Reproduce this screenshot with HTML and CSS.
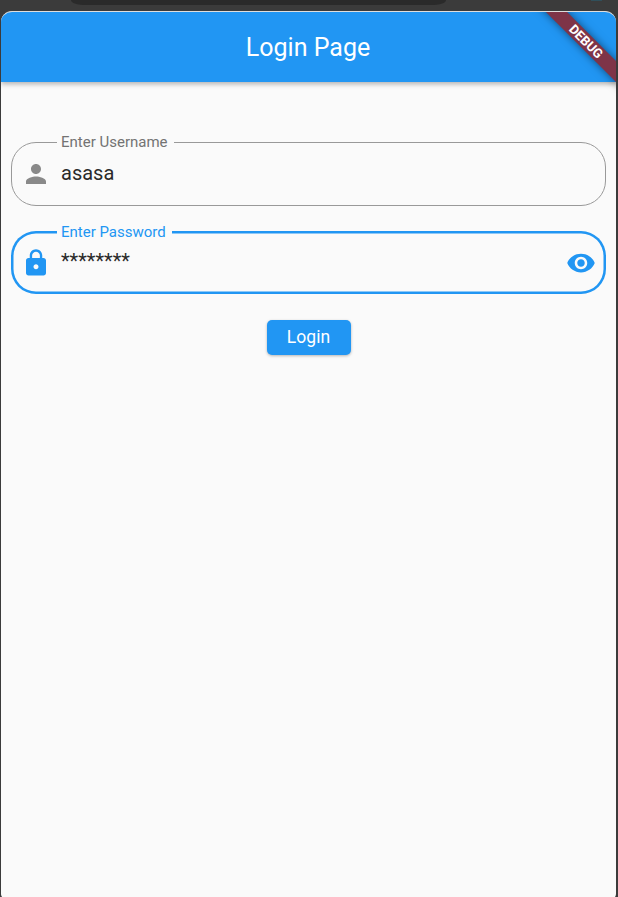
FILE: index.html
```
<!DOCTYPE html>
<html lang="en">
<head>
<meta charset="utf-8">
<title>Login Page</title>
<link rel="stylesheet" href="styles.css">
</head>
<body>
<div class="toolbar"><div class="toolbar-pill"></div><div class="toolbar-mark"></div></div>
<div class="screen">
  <header class="app-bar"><h1>Login Page</h1></header>
  <div class="banner">DEBUG</div>
  <main class="form">
    <div class="field">
      <span class="label">Enter Username</span>
      <svg class="icon" viewBox="0 0 24 24"><path d="M12 12c2.21 0 4-1.79 4-4s-1.79-4-4-4-4 1.79-4 4 1.79 4 4 4zm0 2c-2.67 0-8 1.34-8 4v2h16v-2c0-2.660-5.330-4-8-4z"/></svg>
      <span class="value">asasa</span>
    </div>
    <div class="field focused">
      <span class="label">Enter Password</span>
      <svg class="icon" viewBox="0 0 24 24"><path d="M18 8h-1V6c0-2.760-2.240-5-5-5S7 3.240 7 6v2H6c-1.100 0-2 .9-2 2v10c0 1.100.9 2 2 2h12c1.100 0 2-.9 2-2V10c0-1.100-.9-2-2-2zm-6 9c-1.100 0-2-.9-2-2s.9-2 2-2 2 .9 2 2-.9 2-2 2zm3.100-9H8.900V6c0-1.710 1.390-3.100 3.100-3.100s3.100 1.390 3.100 3.100v2z"/></svg>
      <span class="value">********</span>
      <svg class="icon" viewBox="0 0 24 24"><path d="M12 4.500C7 4.500 2.730 7.610 1 12c1.730 4.390 6 7.500 11 7.500s9.270-3.110 11-7.500c-1.730-4.390-6-7.500-11-7.500zM12 17c-2.760 0-5-2.240-5-5s2.240-5 5-5 5 2.240 5 5-2.240 5-5 5zm0-8c-1.660 0-3 1.340-3 3s1.340 3 3 3 3-1.340 3-3-1.340-3-3-3z"/></svg>
    </div>
    <button class="login" type="button">Login</button>
  </main>
</div>
</body>
</html>
```
FILE: styles.css
```
* { box-sizing: border-box; }
body {
  margin: 0;
  height: 897px;
  overflow: hidden;
  background: #3b3b3b;
  font-family: Roboto, sans-serif;
}
.toolbar {
  display: flex;
  justify-content: space-between;
  height: 11px;
  padding: 0 16px 0 71px;
}
.toolbar-pill {
  width: 375px;
  height: 5px;
  background: #2a2a2a;
  border-radius: 0 0 12px 12px / 0 0 5px 5px;
}
.toolbar-mark { width: 11px; height: 1px; background: #304f5a; }
.screen {
  position: relative;
  width: 615px;
  height: 888px;
  margin-left: 1px;
  overflow: hidden;
  background: #fafafa;
  border-top: 1px solid #dedede;
  border-radius: 11px 11px 5px 5px;
}
.app-bar {
  display: flex;
  align-items: center;
  justify-content: center;
  height: 70px;
  padding: 2px 1px 0 0;
  background: #2196f3;
  box-shadow: 0 2px 5px rgba(0, 0, 0, .3);
}
h1 {
  margin: 0;
  color: #fff;
  font-size: 25px;
  font-weight: 400;
  line-height: 30px;
}
.banner {
  position: absolute;
  top: 22px;
  left: 525px;
  width: 120px;
  height: 15px;
  transform: rotate(45deg);
  background: #7e3448;
  box-shadow: 0 0 8px rgba(0, 0, 0, .5);
  color: #fff;
  font-size: 13px;
  font-weight: 700;
  line-height: 15px;
  text-align: center;
}
.form {
  display: flex;
  flex-direction: column;
  align-items: center;
  padding: 60px 10px 0;
}
.field {
  position: relative;
  display: flex;
  align-items: center;
  width: 595px;
  height: 64px;
  margin-bottom: 25px;
  padding: 0 9px;
  border: 1px solid #999;
  border-radius: 25px;
}
.label {
  position: absolute;
  top: -10px;
  left: 45px;
  padding: 0 6px 0 4px;
  background: #fafafa;
  color: #737373;
  font-size: 15px;
  line-height: 18px;
}
.icon { flex: none; width: 30px; height: 30px; fill: #898989; }
.value {
  flex: 1;
  padding: 0 0 2px 10px;
  color: #2a2a2a;
  font-size: 20px;
  line-height: 24px;
}
.field.focused {
  height: 63px;
  margin-bottom: 25.500px;
  padding: 0 10px;
  border: 0;
  box-shadow: inset 0 0 0 2.500px #2196f3;
}
.focused .label { top: -8px; left: 46px; color: #2196f3; }
.focused .value { padding-bottom: 4px; }
.focused .icon { fill: #2196f3; }
.login {
  width: 84px;
  height: 35px;
  padding: 0;
  border: 0;
  border-radius: 5px;
  background: #2196f3;
  box-shadow: 0 1px 3px rgba(0, 0, 0, .28);
  color: #fff;
  font: 400 17.500px/35px Roboto, sans-serif;
  letter-spacing: .1px;
}
```
